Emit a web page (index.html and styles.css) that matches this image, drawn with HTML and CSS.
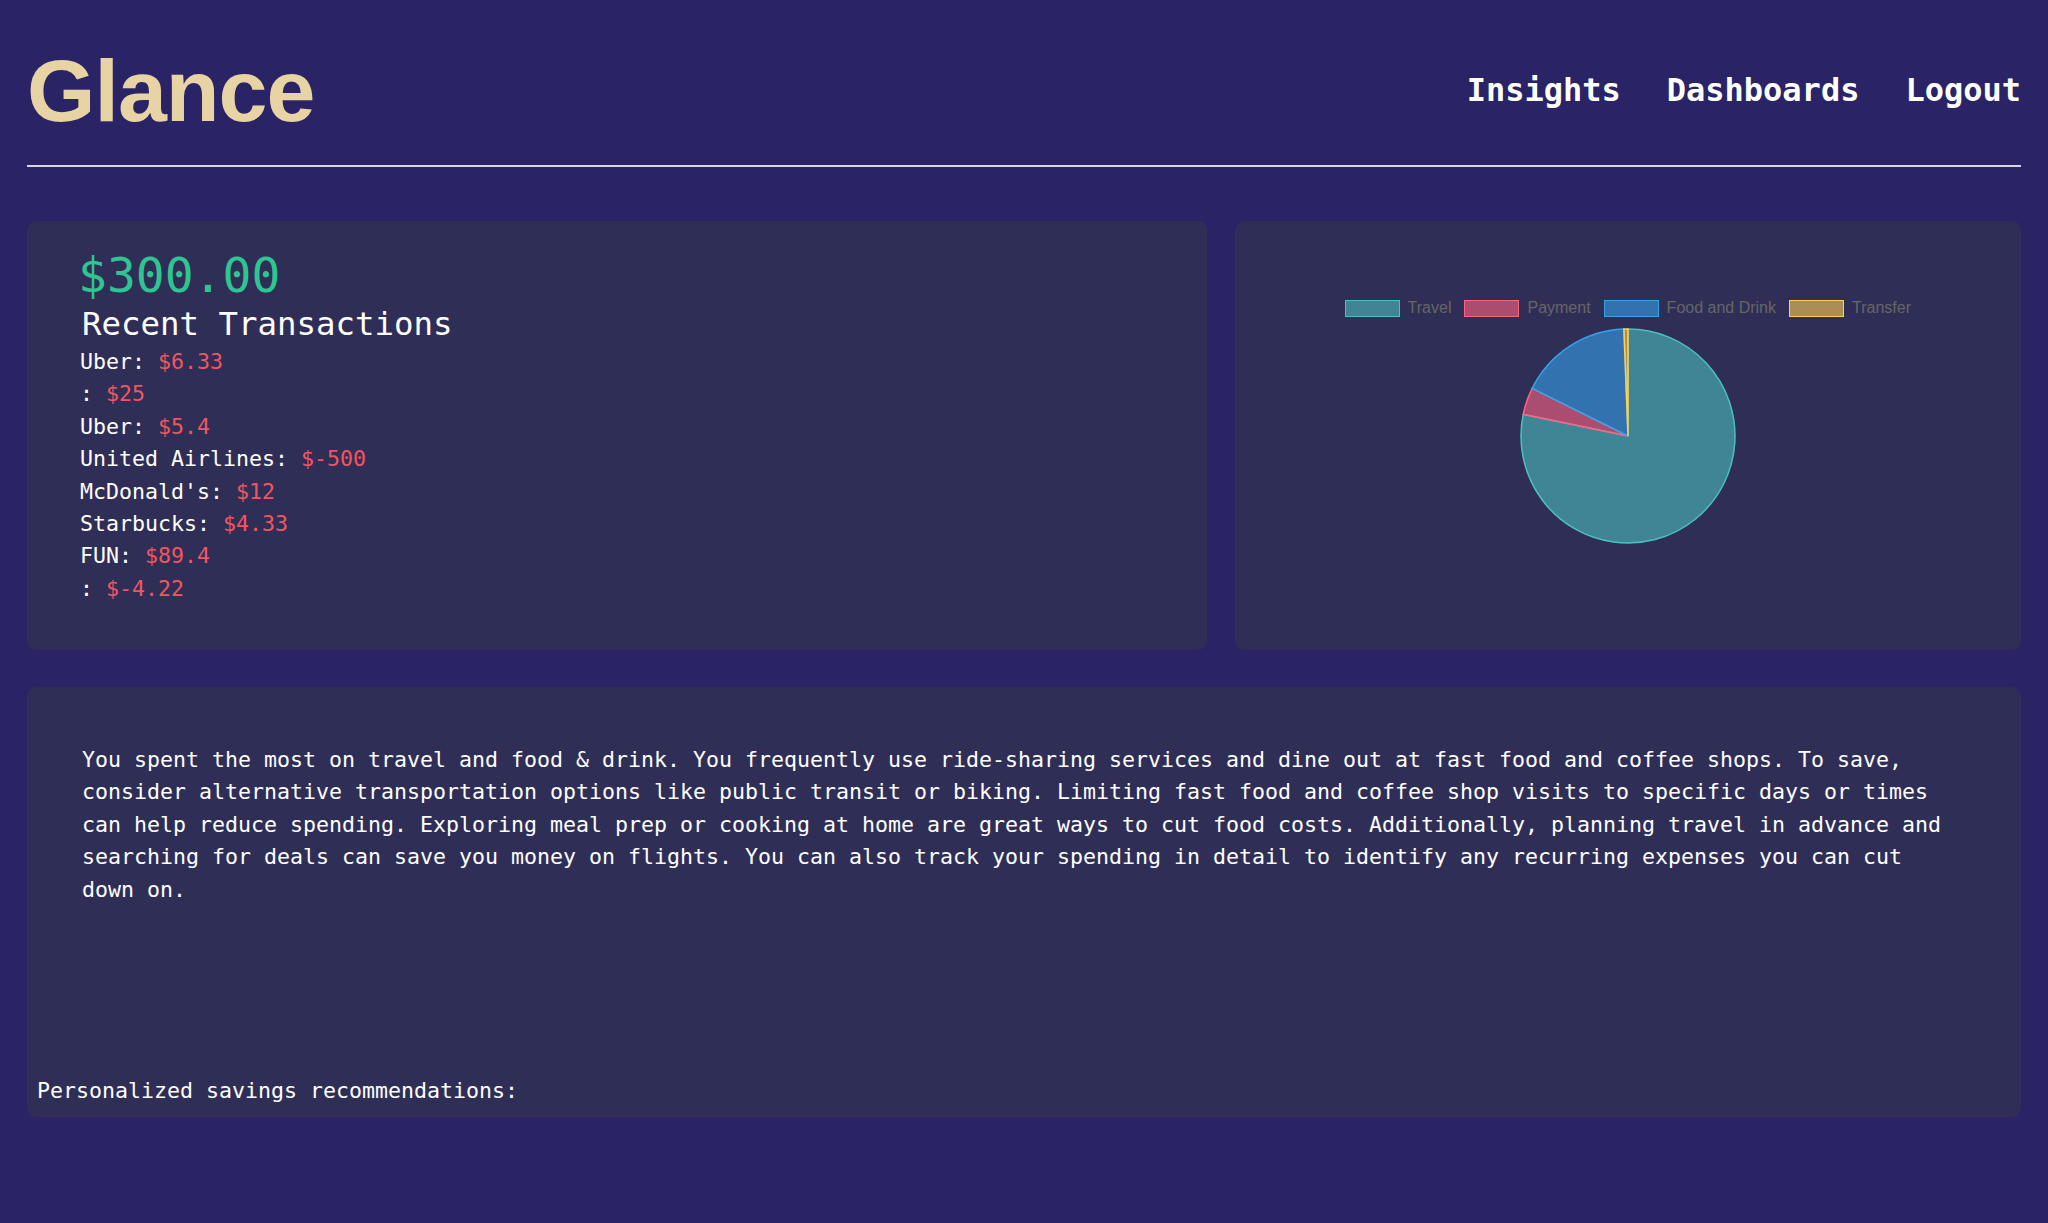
FILE: index.html
```html
<!DOCTYPE html>
<html lang="en">

<head>
    <meta charset="UTF-8">
    <meta name="viewport" content="width=device-width, initial-scale=1.0">
    <title>Glance</title>
    <link rel="stylesheet" href="styles.css">
</head>

<body>
    <header class="topbar">
        <h1 class="logo">Glance</h1>
        <nav class="nav">
            <a href="#">Insights</a>
            <a href="#">Dashboards</a>
            <a href="#">Logout</a>
        </nav>
    </header>
    <hr class="divider">

    <div class="row">
        <div class="card balanceCard">
            <div class="balance">$300.00</div>
            <h2 class="txTitle">Recent Transactions</h2>
            <ul class="txList">
                <li>Uber: <span class="amt">$6.33</span></li>
                <li>: <span class="amt">$25</span></li>
                <li>Uber: <span class="amt">$5.4</span></li>
                <li>United Airlines: <span class="amt">$-500</span></li>
                <li>McDonald's: <span class="amt">$12</span></li>
                <li>Starbucks: <span class="amt">$4.33</span></li>
                <li>FUN: <span class="amt">$89.4</span></li>
                <li>: <span class="amt">$-4.22</span></li>
            </ul>
        </div>
        <div class="card chartCard">
            <div class="legend">
                <div class="legendItem"><span class="swatch travel"></span>Travel</div>
                <div class="legendItem"><span class="swatch payment"></span>Payment</div>
                <div class="legendItem"><span class="swatch food"></span>Food and Drink</div>
                <div class="legendItem"><span class="swatch transfer"></span>Transfer</div>
            </div>
            <svg class="pie" width="220" height="220" viewBox="0 0 220 220">
                <!-- slices go clockwise from 12 o'clock -->
                <path d="M110,110 L110,3 A107,107 0 1 1 5.22,88.30 Z" fill="rgba(75,192,192,0.6)" stroke="rgb(75,192,192)" stroke-width="1.5"/>
                <path d="M110,110 L5.22,88.30 A107,107 0 0 1 14.16,62.42 Z" fill="rgba(255,99,132,0.6)" stroke="rgb(255,99,132)" stroke-width="1.5"/>
                <path d="M110,110 L14.16,62.42 A107,107 0 0 1 105.89,3.08 Z" fill="rgba(54,162,235,0.6)" stroke="rgb(54,162,235)" stroke-width="1.5"/>
                <path d="M110,110 L105.89,3.08 A107,107 0 0 1 110,3 Z" fill="rgba(255,206,86,0.6)" stroke="rgb(255,206,86)" stroke-width="1.5"/>
            </svg>
        </div>
    </div>

    <div class="card insightsCard">
        <p class="insightsText">You spent the most on travel and food &amp; drink. You frequently use ride-sharing services and dine out at fast food and coffee shops. To save, consider alternative transportation options like public transit or biking. Limiting fast food and coffee shop visits to specific days or times can help reduce spending. Exploring meal prep or cooking at home are great ways to cut food costs. Additionally, planning travel in advance and searching for deals can save you money on flights. You can also track your spending in detail to identify any recurring expenses you can cut down on.</p>
        <div class="insightsLabel">Personalized savings recommendations:</div>
    </div>
</body>

</html>
```

FILE: styles.css
```css
* {
    padding: 0;
    margin: 0;
    list-style: none;
    box-sizing: border-box;
}

body {
    background-color: #2a2466;
    color: #fff;
    font-family: "DejaVu Sans Mono", monospace;
    padding: 0 27px;
}

.topbar {
    display: flex;
    justify-content: space-between;
    align-items: center;
    padding-top: 40px;
}

.logo {
    font-family: "Liberation Sans", Arial, sans-serif;
    font-weight: bold;
    font-size: 88px;
    line-height: 101px;
    color: #e7d3a4;
    letter-spacing: -1px;
}

.nav {
    display: flex;
    gap: 46px;
    margin-bottom: 2px;
}

.nav a {
    color: #fff;
    text-decoration: none;
    font-weight: bold;
    font-size: 32px;
}

.divider {
    border: 0;
    border-top: 2px solid #d9d6ea;
    margin: 24px 0 54px;
}

.row {
    display: grid;
    grid-template-columns: 3fr 2fr;
    gap: 28px;
    height: 429px;
}

.card {
    background-color: #2f2e56;
    border-radius: 9px;
}

.balanceCard {
    padding: 26px 0 0 51px;
}

.balance {
    color: #2fc592;
    font-size: 48px;
}

.txTitle {
    font-size: 32.4px;
    font-weight: normal;
    padding-left: 4px;
    margin-top: 2px;
}

.txList {
    margin-top: 3px;
}

.txList li {
    font-size: 21.6px;
    line-height: 1.5;
    padding-left: 2px;
}

.txList .amt {
    color: #f25562;
}

.chartCard {
    display: flex;
    flex-direction: column;
    align-items: center;
    padding-top: 78px;
}

.legend {
    display: flex;
    gap: 13px;
    font-family: "Liberation Sans", Arial, sans-serif;
    font-size: 16px;
    line-height: 18px;
    color: #666;
}

.legendItem {
    display: flex;
    align-items: center;
    gap: 8px;
}

.swatch {
    display: inline-block;
    width: 55px;
    height: 17px;
    border: 1.5px solid;
}

.swatch.travel {
    background-color: rgba(75, 192, 192, 0.6);
    border-color: rgb(75, 192, 192);
}

.swatch.payment {
    background-color: rgba(255, 99, 132, 0.6);
    border-color: rgb(255, 99, 132);
}

.swatch.food {
    background-color: rgba(54, 162, 235, 0.6);
    border-color: rgb(54, 162, 235);
}

.swatch.transfer {
    background-color: rgba(255, 206, 86, 0.6);
    border-color: rgb(255, 206, 86);
}

.pie {
    margin-top: 9px;
}

.insightsCard {
    margin-top: 37px;
    height: 430px;
    padding: 10px;
    display: flex;
    flex-direction: column;
    font-size: 21.6px;
    line-height: 1.5;
}

.insightsText {
    margin: 47px 55px 0 45px;
}

.insightsLabel {
    margin-top: auto;
}
```
